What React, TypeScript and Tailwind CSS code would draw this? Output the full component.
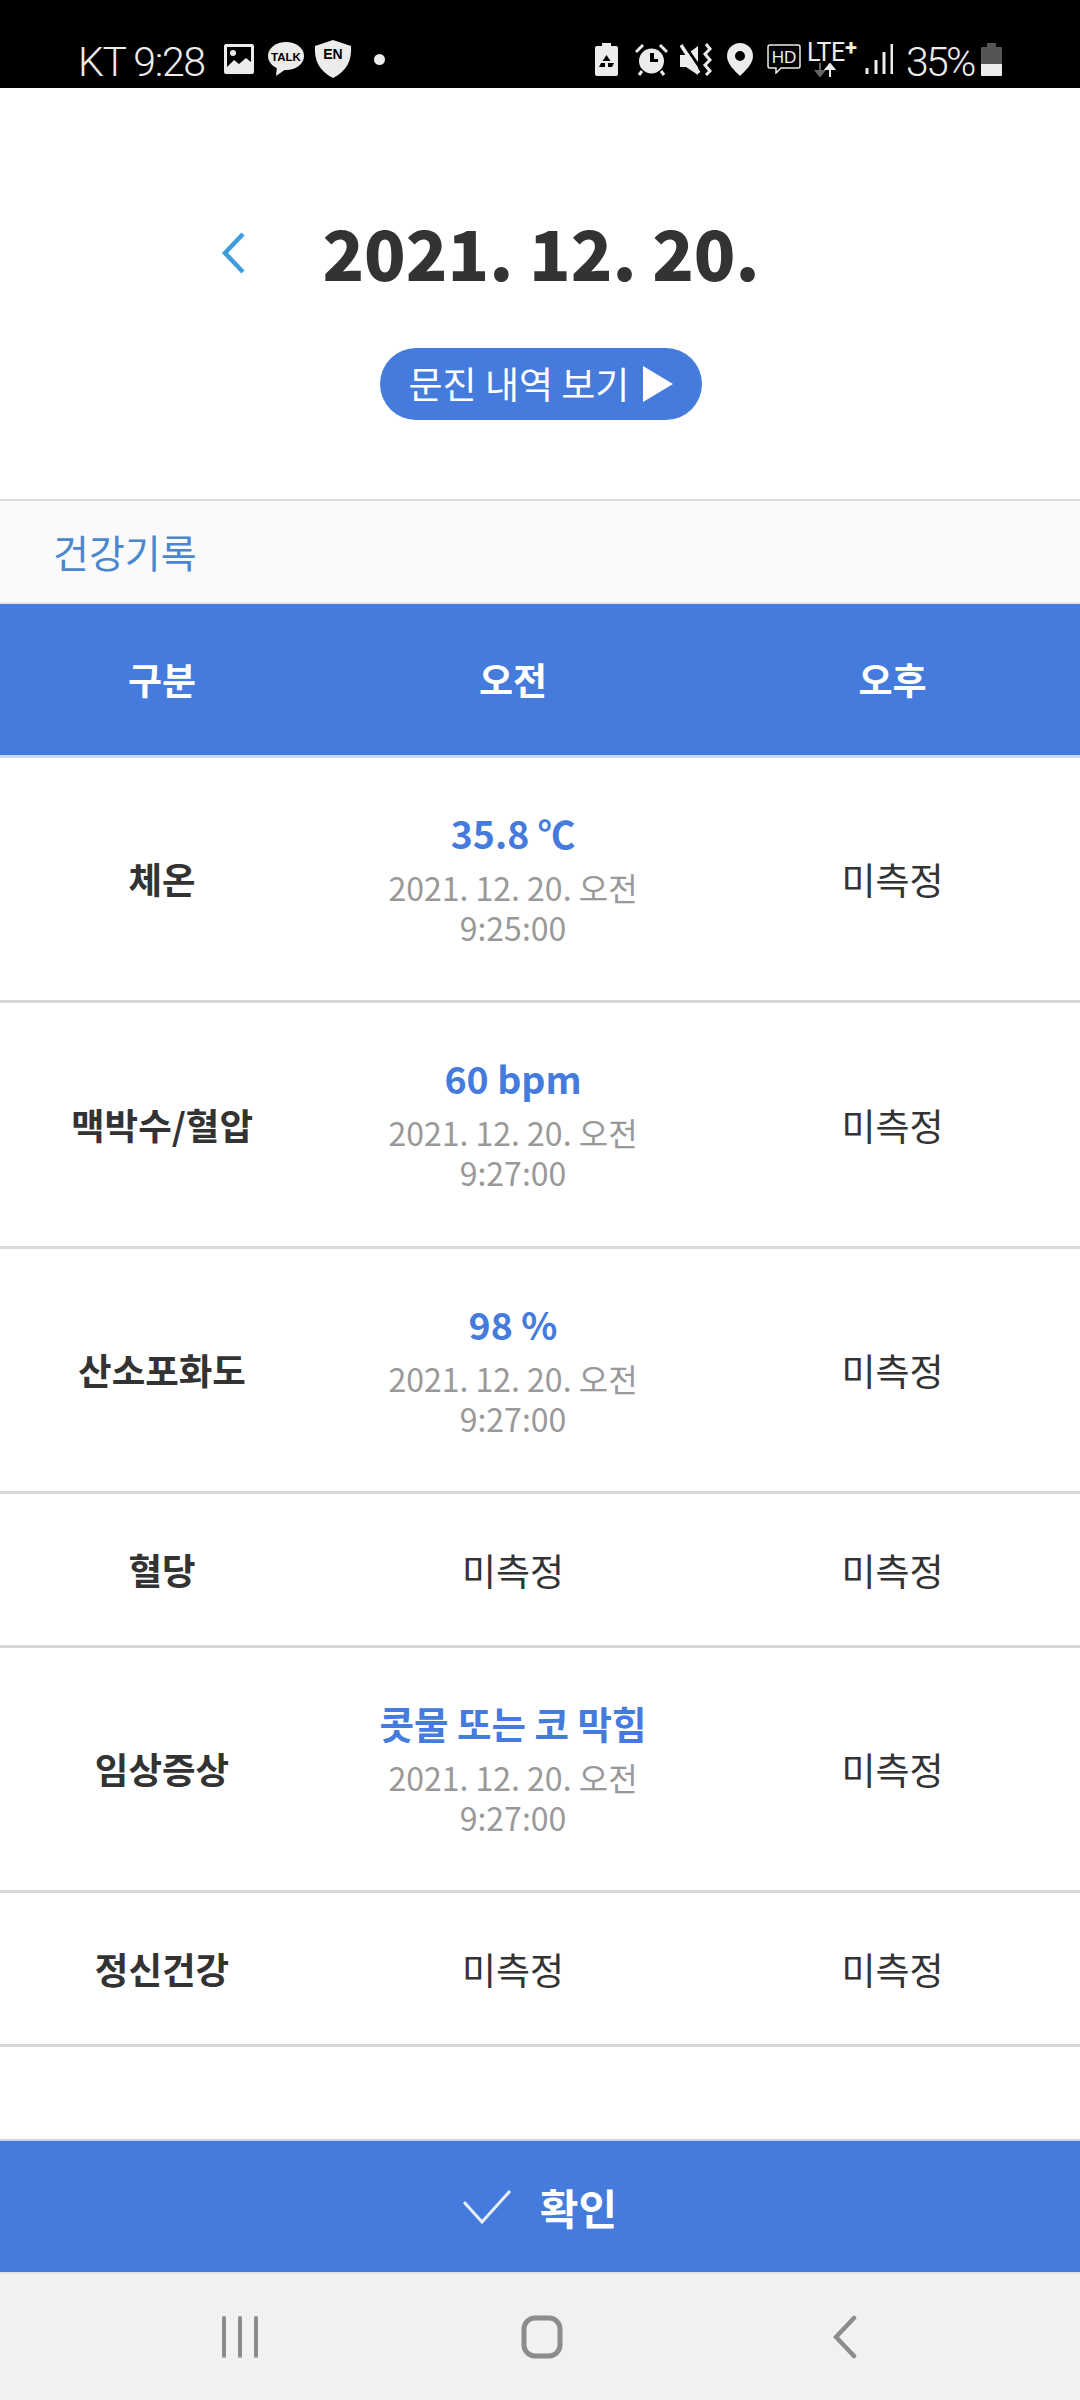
import React from 'react';

const FONT = "font-['Noto_Sans_CJK_KR','Noto_Sans',sans-serif]";

type Row = {
  label: string;
  value?: string;
  time?: string;
  rowClass: string;
};

const ROWS: Row[] = [
  { label: '체온', value: '35.8 ℃', time: '9:25:00', rowClass: 'h-[245px]' },
  { label: '맥박수/혈압', value: '60 bpm', time: '9:27:00', rowClass: 'h-[246px]' },
  { label: '산소포화도', value: '98 %', time: '9:27:00', rowClass: 'h-[245px]' },
  { label: '혈당', rowClass: 'h-[154px]' },
  { label: '임상증상', value: '콧물 또는 코 막힘', time: '9:27:00', rowClass: 'h-[245px]' },
  { label: '정신건강', rowClass: 'h-[154px]' },
];

function StatusBar() {
  return (
    <div className="flex h-[88px] shrink-0 items-end justify-between bg-black pb-[6px] pl-[78px] pr-[78px] text-[#ececec]">
      <div className="flex items-center">
        <span className="w-[128px] translate-y-[3px] whitespace-nowrap font-['Roboto',sans-serif] text-[41px] font-light leading-[46px] tracking-[-1.4px]">KT 9:28</span>
        <svg className="ml-[17px]" width="32" height="32" viewBox="0 0 32 32">
          <rect width="30" height="30" x="1" y="1" rx="2" fill="#ececec" />
          <rect width="24" height="20" x="4" y="4" fill="#000" />
          <circle cx="10" cy="10" r="3" fill="#ececec" />
          <path d="M4 24l7-7 5 4 7-6 5 4v9H4z" fill="#ececec" />
        </svg>
        <svg className="ml-[13px]" width="36" height="36" viewBox="0 0 36 36">
          <ellipse cx="18" cy="15" rx="18" ry="14" fill="#ececec" />
          <path d="M9 26l-1 9 10-7z" fill="#ececec" />
          <text x="18" y="19.5" textAnchor="middle" fontSize="11.5" fontWeight="700" fill="#000" fontFamily="Liberation Sans">TALK</text>
        </svg>
        <svg className="ml-[10px]" width="38" height="38" viewBox="0 0 38 38">
          <path d="M19 0l18 6c1 14-4 25-18 32C5 31 0 20 1 6z" fill="#ececec" />
          <text x="19" y="19" textAnchor="middle" fontSize="14" fontWeight="700" fill="#000" fontFamily="Liberation Sans">EN</text>
        </svg>
        <span className="ml-[22px] h-[11px] w-[11px] rounded-full bg-[#ececec]" />
      </div>
      <div className="flex items-center">
        <svg width="23" height="33" viewBox="0 0 23 33">
          <path d="M7 0h9v3h5a2 2 0 012 2v26a2 2 0 01-2 2H2a2 2 0 01-2-2V5a2 2 0 012-2h5z" fill="#ececec" />
          <path d="M11.5 12l4 6h-8zM6 20h4v4H4zM13 20h6l-2 4h-4z" fill="#000" />
        </svg>
        <svg className="ml-[17px]" width="33" height="33" viewBox="0 0 33 33">
          <circle cx="16.5" cy="18" r="12.5" fill="#ececec" />
          <path d="M15 10v9h8v-3h-4v-6z" fill="#000" />
          <path d="M1 9l7-7M32 9l-7-7M7 28l-3 4M26 28l3 4" stroke="#ececec" strokeWidth="3" fill="none" />
        </svg>
        <svg className="ml-[12px]" width="32" height="33" viewBox="0 0 32 33">
          <path d="M0 12h6l12-9v29L6 24H0z" fill="#ececec" />
          <path d="M3 0l20 29" stroke="#000" strokeWidth="3" />
          <path d="M1 2l18 28" stroke="#ececec" strokeWidth="3.5" />
          <path d="M26 1l4 5-5 5 5 6-5 5 5 6-4 4" stroke="#ececec" strokeWidth="3" fill="none" />
        </svg>
        <svg className="ml-[15px]" width="26" height="33" viewBox="0 0 26 33">
          <path fillRule="evenodd" d="M13 0a13 13 0 0113 13c0 8-8 15-13 20C8 28 0 21 0 13A13 13 0 0113 0zm0 8a5 5 0 100 10 5 5 0 000-10z" fill="#ececec" />
        </svg>
        <svg className="ml-[14px]" width="34" height="30" viewBox="0 0 34 30">
          <path d="M3 1h28a2 2 0 012 2v19a2 2 0 01-2 2H14l-5 5v-5H3a2 2 0 01-2-2V3a2 2 0 012-2z" fill="none" stroke="#ececec" strokeWidth="1.5" />
          <text x="17" y="19" textAnchor="middle" fontSize="17" fill="#ececec" fontFamily="Liberation Sans">HD</text>
        </svg>
        <div className="relative ml-[6px] h-[35px] w-[51px]">
          <span className="absolute left-0 top-[-2px] font-['Roboto',sans-serif] text-[25px] leading-[25px] tracking-[-0.5px]">LTE</span>
          <span className="absolute left-[38px] top-[-5px] font-['Roboto',sans-serif] text-[22px] font-bold leading-[22px]">+</span>
          <svg className="absolute left-[7px] top-[21px]" width="24" height="14" viewBox="0 0 24 14">
            <path d="M6 0v8M2 8h8l-4 5z" stroke="#666" strokeWidth="2" fill="#666" />
            <path d="M16 14V6M12 6h8l-4-5z" stroke="#ececec" strokeWidth="2" fill="#ececec" />
          </svg>
        </div>
        <svg className="ml-[7px]" width="28" height="32" viewBox="0 0 28 32">
          <path d="M2 25v6M11 17v14M19 9v22M27 1v30" stroke="#ececec" strokeWidth="3" />
        </svg>
        <span className="ml-[13px] w-[68px] translate-y-[3px] whitespace-nowrap font-['Roboto',sans-serif] text-[41px] font-light leading-[46px] tracking-[-2.8px]">35%</span>
        <svg className="ml-[7px]" width="21" height="33" viewBox="0 0 21 33">
          <path d="M6 0h9v4h5a1 1 0 011 1v7H0V5a1 1 0 011-1h5zM0 12h21v9H0z" fill="#555" />
          <path d="M0 21h21v11a1 1 0 01-1 1H1a1 1 0 01-1-1z" fill="#ececec" />
        </svg>
      </div>
    </div>
  );
}

function HealthRow({ row }: { row: Row }) {
  return (
    <div className={`grid shrink-0 grid-cols-[324px_378px_378px] items-center border-b-[3px] border-[#d9d9d9] text-center ${row.rowClass}`}>
      <div className="text-[36.5px] font-bold leading-[50px] text-[#333]">{row.label}</div>
      {row.value ? (
        <div className="flex flex-col items-center pb-[4px]">
          <div className="text-[37.5px] font-bold leading-[50px] text-[#447bdc]">{row.value}</div>
          <div className="mt-[9px] text-[32px] leading-[40px] text-[#999]">
            2021. 12. 20. 오전
            <br />
            {row.time}
          </div>
        </div>
      ) : (
        <div className="text-[37px] leading-[50px] text-[#333]">미측정</div>
      )}
      <div className="pl-[3px] text-[37px] leading-[50px] text-[#333]">미측정</div>
    </div>
  );
}

export default function App() {
  return (
    <div className={`flex h-[2400px] w-[1080px] flex-col overflow-hidden bg-white ${FONT}`}>
      <StatusBar />

      <div className="flex h-[413px] shrink-0 flex-col items-center border-b-2 border-[#ddd]">
        <div className="relative mt-[124px] flex h-[80px] items-center justify-center pl-[2px]">
          <svg className="absolute left-[-100px] top-[19px]" width="26" height="44" viewBox="0 0 26 44">
            <path d="M23 3L5 22l18 19" fill="none" stroke="#3f9ddb" strokeWidth="4.5" />
          </svg>
          <h1 className="text-[68.5px] font-black leading-[80px] text-[#333]">2021. 12. 20.</h1>
        </div>
        <button className="ml-[2px] mt-[56px] flex h-[72px] w-[322px] items-center justify-center gap-[14px] rounded-full bg-[#447bdc] text-[37px] text-white">
          문진 내역 보기
          <svg width="30" height="36" viewBox="0 0 30 36">
            <path d="M0 0l30 18L0 36z" fill="#fff" />
          </svg>
        </button>
      </div>

      <div className="flex h-[103px] shrink-0 items-center border-b-2 border-[#e6e6e6] bg-[#fafafa] pl-[53px] text-[39px] text-[#4a87cf]">건강기록</div>

      <div className="grid h-[154px] shrink-0 grid-cols-[324px_378px_378px] items-center border-b-[3px] border-[#c8d8f0] bg-[#447bdc] text-center text-[37px] font-bold text-white">
        <div>구분</div>
        <div>오전</div>
        <div className="pl-[3px]">오후</div>
      </div>

      {ROWS.map((row) => (
        <HealthRow key={row.label} row={row} />
      ))}

      <div className="min-h-0 flex-1" />

      <div className="flex h-[133px] shrink-0 items-center justify-center gap-[29px] border-t-2 border-[#c5d6f1] bg-[#447bdc] text-[42px] font-bold text-white">
        <svg width="48" height="34" viewBox="0 0 48 34">
          <path d="M1 12l18 20L47 1" fill="none" stroke="#e8eefb" strokeWidth="3" />
        </svg>
        확인
      </div>

      <div className="flex h-[128px] shrink-0 items-center border-t-2 border-[#dfe6e3] bg-[#f1f1f1] pl-[220px]">
        <svg width="40" height="42" viewBox="0 0 40 42">
          <path d="M4 2v38M20 2v38M36 2v38" stroke="#8c8c8c" strokeWidth="4" strokeLinecap="round" />
        </svg>
        <svg className="ml-[261px]" width="42" height="44" viewBox="0 0 42 44">
          <rect x="3" y="3" width="36" height="38" rx="11" fill="none" stroke="#8c8c8c" strokeWidth="5" />
        </svg>
        <svg className="ml-[270px]" width="24" height="44" viewBox="0 0 24 44">
          <path d="M21 3L3 22l18 19" fill="none" stroke="#8c8c8c" strokeWidth="4.5" strokeLinecap="round" />
        </svg>
      </div>
    </div>
  );
}
